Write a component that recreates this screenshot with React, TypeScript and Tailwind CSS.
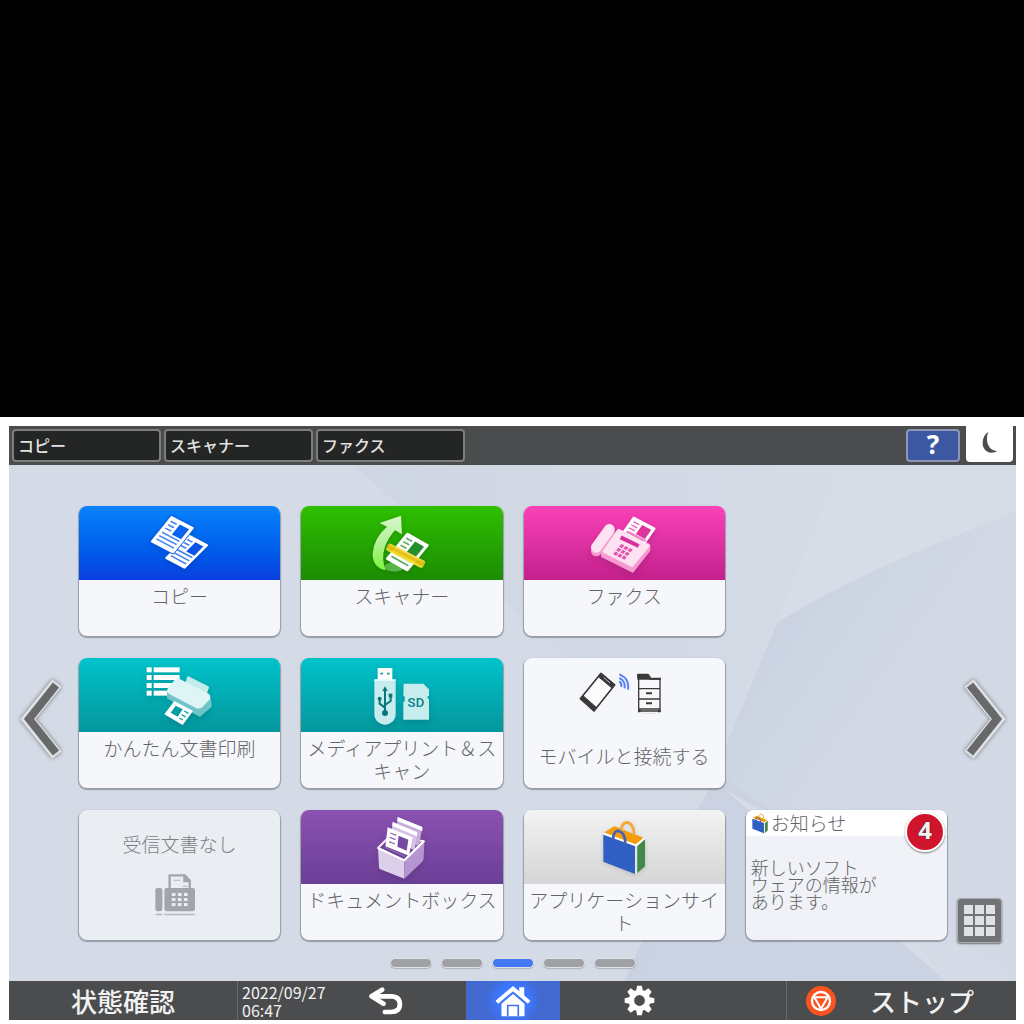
import React from "react";

type IconProps = { className?: string };

/** A printed page drawn in a 100×100 unit square, placed by an affine matrix. */
function Page({ matrix, ink, outline = "none" }: { matrix: string; ink: string; outline?: string }) {
  return (
    <g transform={matrix}>
      <rect x="0" y="0" width="100" height="100" rx="4" fill="#fff" stroke={outline} strokeWidth="7" paintOrder="stroke" />
      <rect x="48" y="12" width="40" height="38" fill={ink} />
      <path d="M12 16H38M12 29H38M12 42H38M12 58H88M12 71H88M12 84H88" stroke={ink} strokeWidth="5" fill="none" opacity="0.75" />
    </g>
  );
}

function CopyIcon() {
  return (
    <svg viewBox="200 33 255 222" className="h-full drop-shadow-sm" aria-hidden="true">
      <Page matrix="matrix(.6 .32 -.72 .72 355 118)" ink="#0a55e6" />
      <Page matrix="matrix(.69 .36 -.63 .78 303 62)" ink="#0a62ee" outline="#0a5fee" />
    </svg>
  );
}

function ScanIcon() {
  return (
    <svg viewBox="206 33 255 222" className="h-full drop-shadow-sm" aria-hidden="true">
      <defs>
        <linearGradient id="scanArrow" x1="0" y1="0" x2="0" y2="1">
          <stop offset="0" stopColor="#d9f7cf" />
          <stop offset="0.5" stopColor="#b2f095" />
          <stop offset="1" stopColor="#7bf53a" />
        </linearGradient>
        <linearGradient id="scanBeam" x1="0" y1="0" x2="0" y2="1">
          <stop offset="0" stopColor="#fbe04a" />
          <stop offset="0.5" stopColor="#e9b800" />
          <stop offset="1" stopColor="#fff04a" />
        </linearGradient>
      </defs>
      <ellipse cx="312" cy="216" rx="30" ry="14" fill="#59b548" />
      <path d="M332 62L268 84L290 95Q250 130 247 175Q246 218 286 226Q272 190 284 155Q294 128 314 106L335 118Z" fill="url(#scanArrow)" />
      <Page matrix="matrix(.67 .38 -.65 .8 350 112)" ink="#23902a" />
      <g transform="translate(346 182) rotate(27)">
        <rect x="-62" y="-12" width="124" height="24" rx="8" fill="url(#scanBeam)" opacity="0.92" />
      </g>
    </svg>
  );
}

function FaxIcon() {
  return (
    <svg viewBox="208 33 255 222" className="h-full drop-shadow-md" aria-hidden="true">
      <path d="M268 170L318 104L410 150V166L360 230L268 184Z" fill="#f59bd0" stroke="#f59bd0" strokeWidth="6" strokeLinejoin="round" />
      <Page matrix="matrix(.68 .36 -.5 .72 362 64)" ink="#e0359f" />
      <path d="M318 106L407 152L358 212L271 168Z" fill="#fde3f2" stroke="#fde3f2" strokeWidth="8" strokeLinejoin="round" />
      <path d="M346 110L400 138" stroke="#f08cc9" strokeWidth="6" />
      <path d="M290 110L251 168" stroke="#f59bd0" strokeWidth="32" strokeLinecap="round" />
      <path d="M290 103L251 157" stroke="#fde3f2" strokeWidth="32" strokeLinecap="round" />
      <path d="M324 127L378 153" stroke="#d92e9d" strokeWidth="12" />
      <g transform="matrix(.9 .44 -.6 .75 326 147)" fill="#e352ae">
        {[0, 1, 2].map((r) => [0, 1, 2].map((c) => <rect key={`${r}${c}`} x={c * 14} y={r * 15} width="10" height="11" />))}
      </g>
    </svg>
  );
}

function EasyPrintIcon() {
  return (
    <svg viewBox="200 31 255 222" className="h-full drop-shadow-md" aria-hidden="true">
      {[59, 82, 106, 129].map((y) => (
        <g key={y} fill="#fff">
          <rect x="229" y={y} width="15" height="15" />
          <rect x="250" y={y} width="78" height="15" />
        </g>
      ))}
      <path d="M354 90L412 119L404 142L348 112Z" fill="#c5ebec" stroke="#c5ebec" strokeWidth="8" strokeLinejoin="round" />
      <path d="M294 134L318 112L418 155L420 176L388 203L294 150Z" fill="#6fc5c8" stroke="#6fc5c8" strokeWidth="8" strokeLinejoin="round" />
      <path d="M316 98Q322 94 330 98L412 140Q420 146 415 154L394 176Q386 182 378 178L298 136Q290 130 296 122Z" fill="#dff5f5" stroke="#dff5f5" strokeWidth="6" strokeLinejoin="round" />
      <path d="M312 160L368 190L337 232L282 200Z" fill="#fff" />
      <path d="M316 174L337 185L322 207L301 195Z" fill="#0a9ca3" />
      <path d="M342 190L354 197M334 201L346 208M327 211L338 217" stroke="#0a9ca3" strokeWidth="4" />
    </svg>
  );
}

function MediaIcon() {
  return (
    <svg viewBox="206 31 255 222" className="h-full drop-shadow-md" aria-hidden="true">
      <rect x="262" y="61" width="44" height="36" fill="#fff" />
      <path d="M270 78H278M290 78H298" stroke="#119da3" strokeWidth="5" />
      <path d="M252 97H316V199A32 32 0 0 1 252 199Z" fill="#c6eced" />
      <path d="M252 97H316" stroke="#e9fafa" strokeWidth="5" />
      <g stroke="#08777d" strokeWidth="6" fill="none">
        <path d="M284 196V125" />
        <path d="M284 180L268 168V154M284 172L301 160V146" />
      </g>
      <g fill="#08777d">
        <path d="M284 116L292 130H276Z" />
        <circle cx="284" cy="196" r="9" />
        <circle cx="268" cy="153" r="6" />
        <rect x="295" y="138" width="11" height="11" />
      </g>
      <path d="M340 108H399L416 125V145H412V153H416V216H339V162H343V146H339Z" fill="#c6eced" />
      <text x="377" y="178" textAnchor="middle" fontSize="40" fontWeight="600" fontFamily="Roboto, 'Liberation Sans', sans-serif" fill="#16868b">SD</text>
    </svg>
  );
}

function MobileIcon() {
  return (
    <svg viewBox="186 31 300 222" className="h-full" aria-hidden="true">
      <path d="M267 77L308 112L246 190L205 153Z" fill="#fbfbfc" stroke="#3a3a3a" strokeWidth="5" strokeLinejoin="round" />
      <path d="M267 77L308 112L300 121L259 87ZM213 144L254 180L246 190L205 153Z" fill="#3a3a3a" stroke="#3a3a3a" strokeWidth="3" />
      <path d="M275 89L294 106" stroke="#bbb" strokeWidth="3" />
      <g fill="none" stroke="#5b82f5" strokeWidth="6">
        <path d="M322 101Q330 108 328 118" />
        <path d="M322 91Q341 100 338 122" />
        <path d="M322 80Q353 92 348 126" />
      </g>
      <path d="M378 92V80H408L414 88V94H444V190H380V92" fill="#f8f8fa" stroke="#3a3a3a" strokeWidth="4" />
      <path d="M376 79H408L414 90H447V96H376Z" fill="#3a3a3a" />
      <path d="M380 123H444M380 154H444M380 184H444" stroke="#3a3a3a" strokeWidth="4" />
      <path d="M402 137H420M402 167H420" stroke="#3a3a3a" strokeWidth="6" />
      <path d="M378 190H386M438 190H446" stroke="#3a3a3a" strokeWidth="8" />
      <path d="M392 197H432" stroke="#ddd" strokeWidth="3" />
    </svg>
  );
}

function IdleFaxIcon({ className }: IconProps) {
  return (
    <svg viewBox="254 220 122 130" className={className} aria-hidden="true">
      <rect x="255" y="264" width="21" height="69" rx="6" fill="#a2a5aa" />
      <path d="M282 270Q282 264 288 264H294V223H344L361 241V264H367Q373 264 373 270V327Q373 333 367 333H288Q282 333 282 327Z" fill="#a2a5aa" />
      <path d="M301 230H338V247H354V264H301Z" fill="#eaedf2" />
      <path d="M309 241H330M336 259H352" stroke="#b4b7bc" strokeWidth="3" />
      <g fill="#eaedf2">
        {[279, 294, 309].map((y) => [304, 322, 340].map((x) => <rect key={`${x}${y}`} x={x} y={y} width="11" height="9" />))}
      </g>
      <path d="M256 343H276M282 343H373" stroke="#b4b7bc" strokeWidth="4" />
    </svg>
  );
}

function BoxIcon() {
  return (
    <svg viewBox="866 31 255 222" className="h-full drop-shadow-md" aria-hidden="true">
      <path d="M923 145L950 118L1060 124L1002 182Z" fill="#6d4596" stroke="#f4eefa" strokeWidth="6" strokeLinejoin="round" />
      <path d="M982 52L1056 82L1046 140L976 110Z" fill="#c6abdb" />
      <path d="M982 52L1056 82V94L981 64Z" fill="#fff" />
      <path d="M967 67L1041 98L1033 152L961 120Z" fill="#d5c1e5" />
      <path d="M967 67L1041 98L1040 110L966 79Z" fill="#fff" />
      <path d="M952 83L1027 113L1016 168L945 140Z" fill="#fff" />
      <path d="M985 108L1014 120L1009 153L981 141Z" fill="#74499f" />
      <path d="M960 100L978 107M958 113L976 120M956 126L974 133" stroke="#8e67b4" strokeWidth="4" />
      <path d="M944 143L1004 170" stroke="#8e67b4" strokeWidth="4" />
      <path d="M923 146L1002 182V237L930 209Q926 207 926 202Z" fill="#dccfe9" />
      <path d="M1002 182L1062 124L1060 176Q1060 182 1056 186L1002 237Z" fill="#b595d0" />
      <path d="M924 146L1002 182L1062 124" fill="none" stroke="#fff" strokeWidth="6" strokeLinejoin="round" />
    </svg>
  );
}

function BagDrawing() {
  return (
    <>
      <path d="M275 98L305 80L392 114L370 136Z" fill="#f59c0b" />
      <path d="M273 102L370 137L397 115" fill="none" stroke="#fff" strokeWidth="6" />
      <path d="M327 96C322 58 364 58 364 102" fill="none" stroke="#f4a62e" strokeWidth="8" />
      <path d="M272 105L367 140V223L272 186Z" fill="#305fc4" />
      <path d="M374 140L397 119V200L374 220Z" fill="#43894a" />
      <path d="M370 139V222" stroke="#e9eef0" strokeWidth="5" />
      <path d="M302 122C298 80 340 86 338 134" fill="none" stroke="#4162b7" strokeWidth="8" />
    </>
  );
}

function BagIcon() {
  return (
    <svg viewBox="208 31 255 222" className="h-full drop-shadow-sm" aria-hidden="true">
      <BagDrawing />
    </svg>
  );
}

function Backdrop() {
  return (
    <svg className="absolute inset-0 h-full w-full" viewBox="0 0 1007 516" preserveAspectRatio="none" aria-hidden="true">
      <defs>
        <linearGradient id="facetA" x1="0" y1="0" x2="1" y2="0.3">
          <stop offset="0" stopColor="#c5cde0" />
          <stop offset="1" stopColor="#d3dae5" />
        </linearGradient>
        <linearGradient id="facetB" x1="0" y1="0" x2="0.9" y2="1">
          <stop offset="0" stopColor="#c5cde0" />
          <stop offset="0.5" stopColor="#d2d9e5" />
          <stop offset="1" stopColor="#d3dae6" />
        </linearGradient>
        <linearGradient id="facetC" x1="0" y1="0" x2="1" y2="0">
          <stop offset="0" stopColor="#ccd4e2" />
          <stop offset="1" stopColor="#d5dce6" />
        </linearGradient>
      </defs>
      <rect width="1007" height="516" fill="#d4dbe6" />
      <path d="M345 0H833L700 320L345 0Z" fill="url(#facetC)" opacity="0.6" />
      <path d="M833 0L616 516H1007V0Z" fill="#d6dde7" />
      <path d="M1007 46Q860 105 768 158L680 370L616 516H937L715 324L1007 500Z" fill="url(#facetA)" />
      <path d="M1007 48Q850 105 768 158L706 306L1007 516Z" fill="url(#facetB)" />
      <path d="M715 324L937 516H616L690 340Z" fill="#cbd2e2" opacity="0.8" />
      <path d="M715 324Q860 410 937 516H1007V480Z" fill="#d3dae6" opacity="0.7" />
    </svg>
  );
}

const card =
  "flex h-[130px] flex-col overflow-hidden rounded-lg text-[#626467] shadow-[0_1px_1px_1px_rgba(100,105,115,0.55)]";

type TileProps = { label: string; header: string; className?: string; children: React.ReactNode };

function Tile({ label, header, className = "", children }: TileProps) {
  return (
    <button type="button" className={`${card} bg-[#f6f7fa] ${className}`}>
      <span className={`flex h-[74px] w-full justify-center ${header}`}>{children}</span>
      <span className="w-full pt-1 text-center text-[19px] leading-[23px] font-light">{label}</span>
    </button>
  );
}

function Chevron({ className = "" }: IconProps) {
  return (
    <svg viewBox="0 0 44 84" className={`h-21 w-11 drop-shadow-[0_0_2px_rgba(90,90,90,0.8)] ${className}`} aria-hidden="true">
      <path d="M7 6L36 42L7 78" fill="none" stroke="#dfe2e5" strokeWidth="12" />
      <path d="M8 8L35 42L8 76" fill="none" stroke="#68696b" strokeWidth="8" />
    </svg>
  );
}

export default function App() {
  return (
    <div
      lang="ja"
      className="flex min-h-screen flex-col justify-end bg-black font-['Noto_Sans_CJK_JP','Noto_Sans',sans-serif]"
    >
      <div className="bg-white px-2 pt-[9px] pb-1 pl-[9px]">
        <header className="flex h-[39px] items-center gap-[3px] bg-[#4b4c4e] px-[3px]">
          {["コピー", "スキャナー", "ファクス"].map((name) => (
            <button
              key={name}
              type="button"
              className="h-[33px] w-[149px] rounded border-2 border-[#7c7d7d] bg-[#242625] px-1 pb-0.5 text-left text-base leading-none font-medium text-[#e2e2e2]"
            >
              {name}
            </button>
          ))}
          <button
            type="button"
            aria-label="ヘルプ"
            className="ml-auto flex h-[33px] w-[54px] items-center justify-center rounded border-2 border-[#8d97b5] bg-[#3c58a2] pb-1 font-['Noto_Sans'] text-[26px] leading-none font-bold text-white"
          >
            ?
          </button>
          <button
            type="button"
            aria-label="スリープ"
            className="ml-[3px] flex h-9 w-[47px] items-center justify-center self-start rounded-b bg-white"
          >
            <svg viewBox="0 0 48 66" className="mb-1 h-[22px] w-4" aria-hidden="true">
              <path d="M19 2C-6 18 -4 64 28 65Q40 65 46 60C20 60 8 30 19 2Z" fill="#4b4c4e" />
            </svg>
          </button>
        </header>

        <main className="relative">
          <Backdrop />
          <div className="relative flex pt-[41px]">
            <div className="flex w-[70px] shrink-0 items-center justify-center">
              <button type="button" aria-label="前のページ" className="mr-1 mb-2">
                <Chevron className="-scale-x-100" />
              </button>
            </div>

            <div className="grid flex-1 grid-cols-4 gap-x-[21px] gap-y-[22px]">
              <Tile label="コピー" header="bg-linear-to-b from-[#0c82fc] to-[#0a3fdf]"><CopyIcon /></Tile>
              <Tile label="スキャナー" header="bg-linear-to-b from-[#2fc000] to-[#1c8c04]"><ScanIcon /></Tile>
              <Tile label="ファクス" header="bg-linear-to-b from-[#fb41b8] to-[#c3208d]"><FaxIcon /></Tile>
              <Tile label="かんたん文書印刷" className="col-start-1" header="bg-linear-to-b from-[#00c3cb] to-[#04979d]"><EasyPrintIcon /></Tile>
              <Tile label="メディアプリント＆スキャン" header="bg-linear-to-b from-[#00c3cb] to-[#04979d]"><MediaIcon /></Tile>
              <button type="button" className={`${card} bg-[#f6f7fa]`}>
                <span className="flex h-[74px] w-full justify-center"><MobileIcon /></span>
                <span className="w-full pt-3 text-center text-[19px] leading-[23px] font-light">モバイルと接続する</span>
              </button>
              <button type="button" className={`${card} col-start-1 items-center bg-[#eaedf2] pt-[22px]`}>
                <span className="text-[19px] leading-[23px] font-light text-[#7c7e82]">受信文書なし</span>
                <IdleFaxIcon className="mt-[18px] mr-2 h-11 w-[41px]" />
              </button>
              <Tile label="ドキュメントボックス" header="bg-linear-to-b from-[#8a52b0] to-[#6b3f98]"><BoxIcon /></Tile>
              <Tile label="アプリケーションサイト" header="bg-linear-to-b from-[#f3f3f3] to-[#d5d5d5]"><BagIcon /></Tile>
              <button type="button" className="relative col-start-4 text-left">
                <span className={`${card} bg-[#f0f2f7]`}>
                  <span className="flex h-[26px] items-center gap-0.5 bg-white pl-[5px]">
                    <svg viewBox="262 58 144 170" className="h-[21px] w-[18px]" aria-hidden="true">
                      <BagDrawing />
                    </svg>
                    <span className="text-[19px] leading-[26px] font-light">お知らせ</span>
                  </span>
                  <span className="px-[5px] pt-[23px] text-lg leading-[17px] font-light">
                    新しいソフト<br />ウェアの情報が<br />あります。
                  </span>
                </span>
                <span className="absolute top-0.5 right-0.5 flex size-10 items-center justify-center rounded-full border-2 border-white bg-[#d0142c] pb-1 font-['Noto_Sans'] text-2xl leading-none font-bold text-[#f1efef] shadow-[0_1px_2px_rgba(90,90,90,0.8)] [text-shadow:0_0_2px_#333]">
                  4
                </span>
              </button>
            </div>

            <div className="relative flex w-[69px] shrink-0 items-center justify-center">
              <button type="button" aria-label="次のページ" className="mb-2 ml-1">
                <Chevron />
              </button>
              <button
                type="button"
                aria-label="アプリ一覧"
                className="absolute -bottom-[3px] left-2.5 grid size-[45px] grid-cols-3 gap-0.5 rounded border border-[#a9abae] bg-[#717377] p-1.5 shadow-[0_1px_2px_rgba(80,80,80,0.8)]"
              >
                {Array.from({ length: 9 }, (_, i) => (
                  <span key={i} className="h-[9px] bg-[#dfe1e2]" />
                ))}
              </button>
            </div>
          </div>

          <nav className="relative flex h-[41px] items-center justify-center gap-[9px] pt-1" aria-label="ページ">
            {[0, 1, 2, 3, 4].map((i) => (
              <button
                key={i}
                type="button"
                aria-label={`ページ ${i + 1}`}
                className={`h-[10px] w-[42px] rounded-full border border-[#dfe3e8] shadow-[0_1px_1px_rgba(150,150,160,0.6)] ${i === 2 ? "bg-[#4479f3]" : "bg-[#9fa1a4]"}`}
              />
            ))}
          </nav>
        </main>

        <footer className="grid h-[39px] grid-cols-[228fr_229fr_94fr_226fr_230fr] bg-[#4b4c4e] text-[#f2f2f2]">
          <button type="button" className="text-[26px] leading-none font-medium">状態確認</button>
          <div className="flex items-center border-l border-[#6a6b6d] pl-1">
            <time dateTime="2022-09-27T06:47" className="text-base leading-[18px]">
              2022/09/27<br />06:47
            </time>
            <button type="button" aria-label="戻る" className="ml-[42px]">
              <svg viewBox="0 0 104 84" className="h-7 w-[35px]" aria-hidden="true">
                <path d="M14 28H68Q95 28 95 52Q95 75 68 75H50" fill="none" stroke="#fff" strokeWidth="14" strokeLinecap="round" />
                <path d="M42 8L10 28L46 50" fill="none" stroke="#fff" strokeWidth="14" strokeLinecap="round" strokeLinejoin="round" />
              </svg>
            </button>
          </div>
          <button
            type="button"
            aria-label="ホーム"
            className="flex items-center justify-center bg-[radial-gradient(circle,#3d76ff_0,#3d76ff_30%,#4169cf_55%)]"
          >
            <svg viewBox="0 0 106 94" className="mt-0.5 h-[31px] w-9" aria-hidden="true">
              <path d="M72 4H87V38L72 24Z" fill="#fff" />
              <path d="M4 49L53 8L102 49" fill="none" stroke="#fff" strokeWidth="12" />
              <path d="M53 24L88 54V92H18V54Z" fill="#fff" />
              <path d="M37 92V59H69V92" fill="none" stroke="#4474ea" strokeWidth="5" />
              <path d="M15 50L53 19L91 50" fill="none" stroke="#4474ea" strokeWidth="3" />
            </svg>
          </button>
          <button type="button" aria-label="設定" className="flex items-center pl-16">
            <svg viewBox="-46 -46 92 92" className="h-[31px] w-[31px]" aria-hidden="true">
              {[0, 45, 90, 135, 180, 225, 270, 315].map((a) => (
                <path key={a} d="M-11 -24L-7 -44H7L11 -24Z" fill="#fff" transform={`rotate(${a})`} />
              ))}
              <circle r="24" fill="none" stroke="#fff" strokeWidth="16" />
            </svg>
          </button>
          <button type="button" className="flex items-center border-l border-[#6a6b6d] pl-[19px] text-[26px] leading-none font-medium">
            <svg viewBox="0 0 90 90" className="size-[30px] shrink-0" aria-hidden="true">
              <circle cx="45" cy="45" r="45" fill="#fa5320" />
              <circle cx="45" cy="45" r="27" fill="none" stroke="#fff" strokeWidth="7" />
              <path d="M25 34H65L45 68Z" fill="#fa5320" stroke="#fff" strokeWidth="6" strokeLinejoin="round" />
            </svg>
            <span className="ml-[34px]">ストップ</span>
          </button>
        </footer>
      </div>
    </div>
  );
}
